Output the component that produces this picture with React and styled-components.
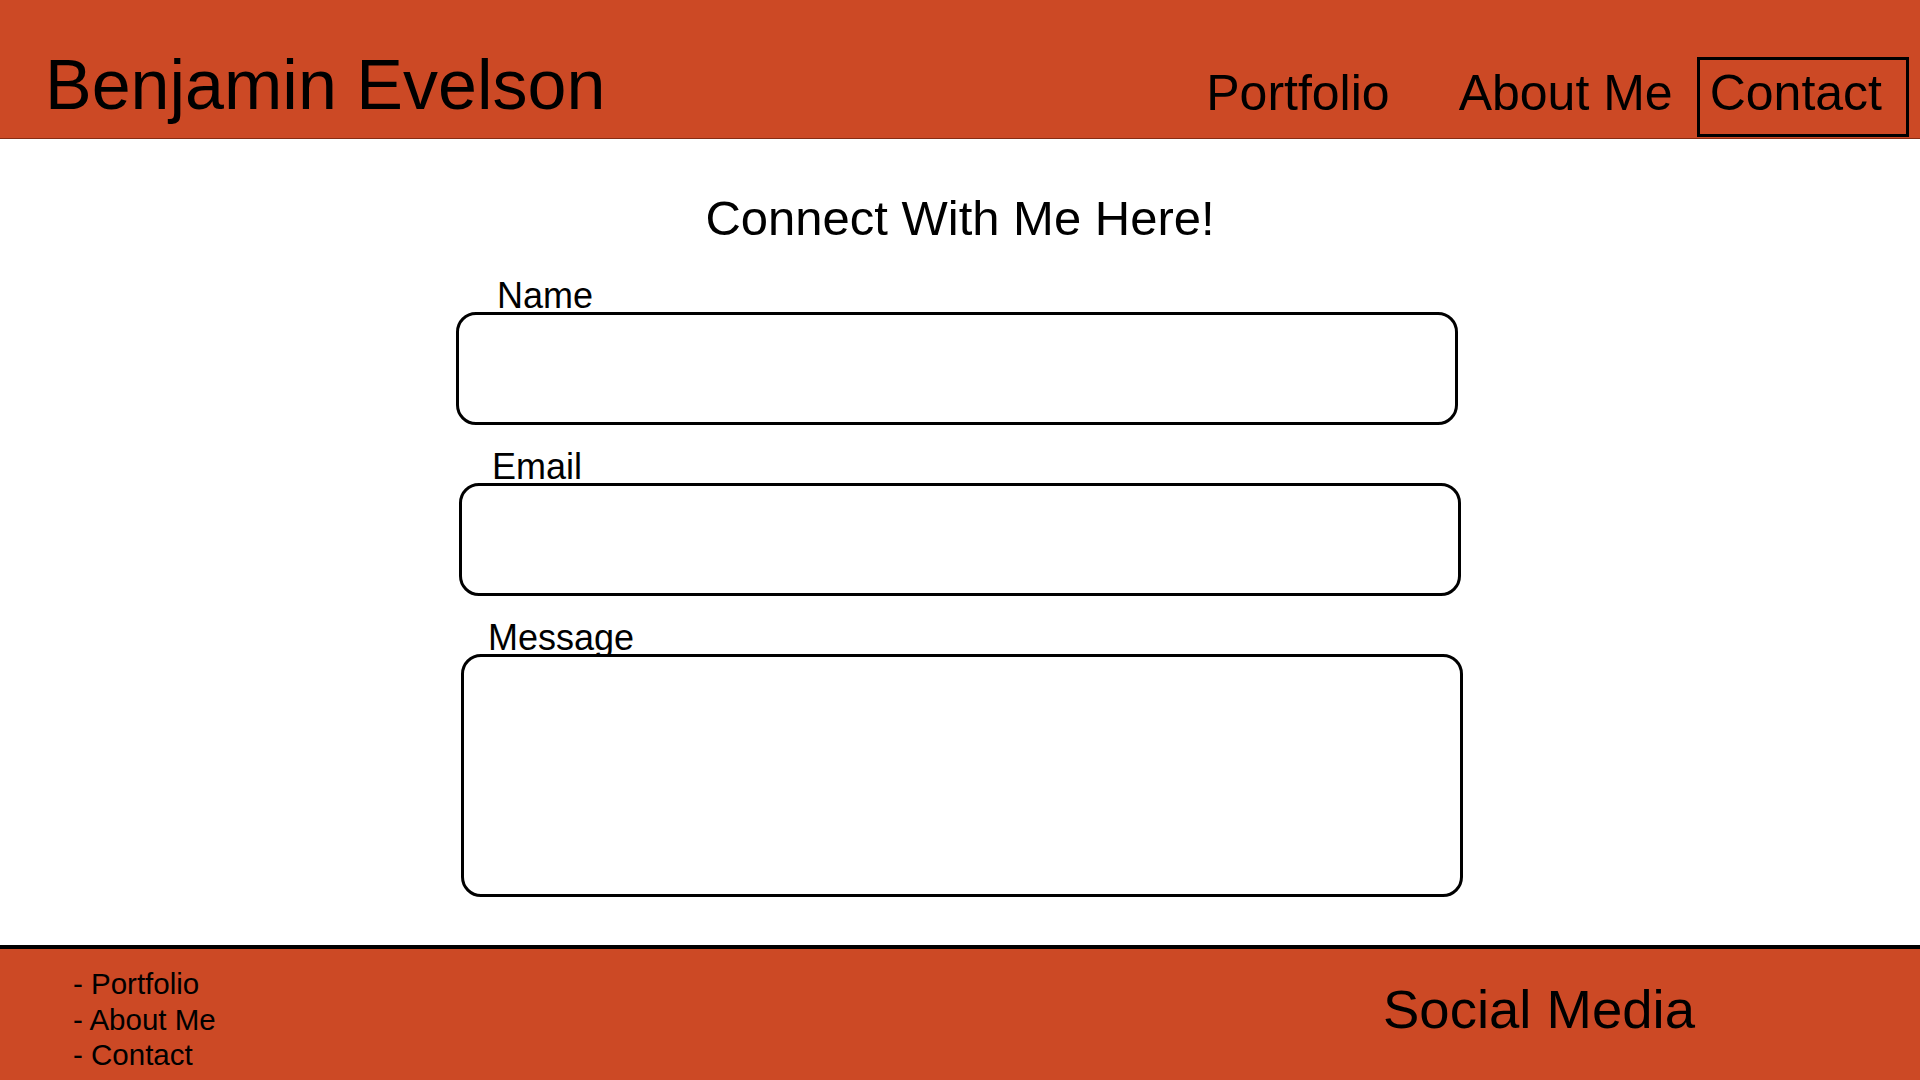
import styled, { createGlobalStyle } from "styled-components";

const GlobalStyle = createGlobalStyle`
  html, body {
    margin: 0;
    padding: 0;
    background: #fff;
    overflow: hidden;
  }
  * {
    box-sizing: border-box;
  }
`;

const Page = styled.div`
  width: 1920px;
  height: 1080px;
  display: flex;
  flex-direction: column;
  font-family: "Liberation Sans", Arial, sans-serif;
  color: #000;
`;

const Header = styled.header`
  height: 139px;
  display: flex;
  align-items: flex-end;
  justify-content: space-between;
  padding: 0 11px 1px 45px;
  background-color: #cc4925;
  border-bottom: 1px solid #862c14;
`;

const Brand = styled.h1`
  margin: 0 0 12px;
  font-size: 70px;
  font-weight: normal;
  line-height: 80px;
`;

const Nav = styled.nav`
  display: flex;
  align-items: flex-end;
`;

const NavItem = styled.a`
  display: block;
  height: 80px;
  padding: 0 ${(p) => p.$right || 24}px 8px ${(p) => (p.$active ? 10 : 8)}px;
  margin-right: ${(p) => p.$space || 0}px;
  border: 3px solid ${(p) => (p.$active ? "#000" : "transparent")};
  font-size: 50px;
  line-height: 66px;
  color: #000;
  text-decoration: none;
`;

const Main = styled.main`
  flex: 1;
  display: flex;
  flex-direction: column;
  align-items: center;
`;

const Heading = styled.h2`
  margin: 51px 0 29px;
  font-size: 49px;
  font-weight: normal;
  line-height: 56px;
  text-align: center;
`;

const Form = styled.form`
  width: 1008px;
  display: flex;
  flex-direction: column;
  gap: 21px;
`;

const Field = styled.div`
  display: flex;
  flex-direction: column;
  margin-left: ${(p) => p.$shift}px;
`;

const Label = styled.label`
  display: block;
  margin-left: ${(p) => p.$indent}px;
  font-size: 36px;
  line-height: 42px;
  height: 37px;
`;

const TextInput = styled.input`
  width: 1002px;
  height: 113px;
  border: 3px solid #000;
  border-radius: 20px;
  background: #fff;
  outline: none;
  padding: 0 20px;
  font-family: inherit;
  font-size: 32px;
`;

const MessageInput = styled.textarea`
  width: 1002px;
  height: 243px;
  border: 3px solid #000;
  border-radius: 20px;
  background: #fff;
  outline: none;
  padding: 16px 20px;
  resize: none;
  font-family: inherit;
  font-size: 32px;
`;

const Footer = styled.footer`
  height: 135px;
  display: flex;
  justify-content: space-between;
  align-items: flex-start;
  padding: 17px 225px 0 73px;
  background-color: #cc4925;
  border-top: 4px solid #000;
`;

const FooterLinks = styled.ul`
  margin: 0;
  padding: 0;
  list-style: none;
`;

const FooterLink = styled.li`
  font-size: 29.5px;
  line-height: 35.5px;
`;

const Social = styled.div`
  margin-top: 12px;
  font-size: 54.5px;
  line-height: 64px;
`;

const App = () => {
  return (
    <>
      <GlobalStyle />
      <Page>
        <Header>
          <Brand>Benjamin Evelson</Brand>
          <Nav>
            <NavItem href="#portfolio" $space={34} $right={21}>
              Portfolio
            </NavItem>
            <NavItem href="#about" $right={21}>
              About Me
            </NavItem>
            <NavItem href="#contact" $active>
              Contact
            </NavItem>
          </Nav>
        </Header>

        <Main>
          <Heading>Connect With Me Here!</Heading>
          <Form onSubmit={(e) => e.preventDefault()}>
            <Field $shift={0}>
              <Label htmlFor="name" $indent={41}>
                Name
              </Label>
              <TextInput id="name" type="text" />
            </Field>
            <Field $shift={3}>
              <Label htmlFor="email" $indent={33}>
                Email
              </Label>
              <TextInput id="email" type="email" />
            </Field>
            <Field $shift={5}>
              <Label htmlFor="message" $indent={27}>
                Message
              </Label>
              <MessageInput id="message" />
            </Field>
          </Form>
        </Main>

        <Footer>
          <FooterLinks>
            <FooterLink>- Portfolio</FooterLink>
            <FooterLink>- About Me</FooterLink>
            <FooterLink>- Contact</FooterLink>
          </FooterLinks>
          <Social>Social Media</Social>
        </Footer>
      </Page>
    </>
  );
};

export default App;
